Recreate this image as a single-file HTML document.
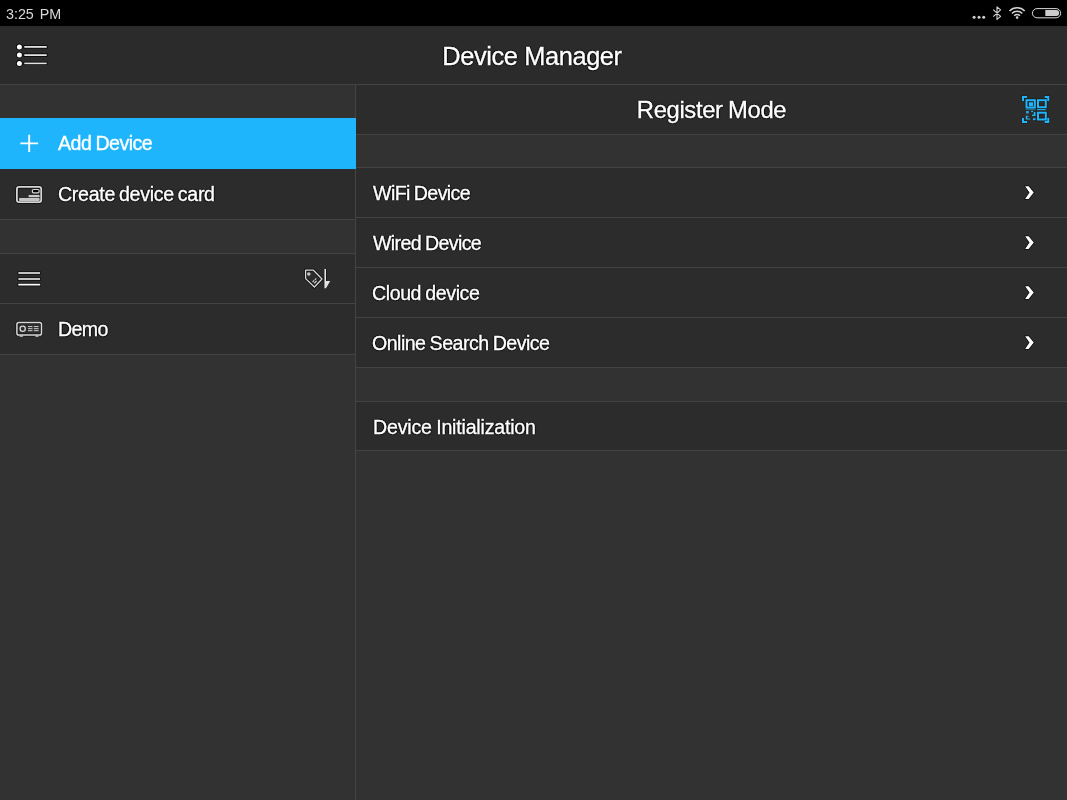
<!DOCTYPE html>
<html><head><meta charset="utf-8">
<style>
*{margin:0;padding:0;box-sizing:border-box}
html,body{width:1067px;height:800px;overflow:hidden;background:#323232;font-family:"Liberation Sans",sans-serif;color:#fff}
.abs{position:absolute}
#time,#title,.t{will-change:transform}
#status{left:0;top:0;width:1067px;height:26px;background:#000}
#time{left:5.6px;top:6px;font-size:14.3px;line-height:16px;color:#d8d8d8;word-spacing:2px;letter-spacing:0}
#header{left:0;top:26px;width:1067px;height:58px;background:#2b2b2b}
#hline{left:0;top:84px;width:1067px;height:1px;background:#434343}
#title{left:0;top:27px;width:1064px;height:58px;line-height:58px;text-align:center;font-size:25.4px;-webkit-text-stroke:0.35px #fff;text-shadow:1px 0 1px rgba(0,0,0,.75),-1px 0 1px rgba(0,0,0,.75),0 1px 1px rgba(0,0,0,.75),0 -1px 1px rgba(0,0,0,.75)}
#left{left:0;top:85px;width:355px;height:715px;background:#323232}
#vline{left:355px;top:85px;width:1px;height:715px;background:#434343}
#right{left:356px;top:85px;width:711px;height:715px;background:#323232}
.row{position:absolute;left:0;width:100%;background:#2c2c2c}
.ln{position:absolute;left:0;width:100%;height:1px;background:#434343}
.t{position:absolute;z-index:3;margin-top:0;font-size:19.6px;line-height:22px;white-space:nowrap;word-spacing:-0.8px;-webkit-text-stroke:0.35px #fff;text-shadow:1px 0 1px rgba(0,0,0,.75),-1px 0 1px rgba(0,0,0,.75),0 1px 1px rgba(0,0,0,.75),0 -1px 1px rgba(0,0,0,.75)}
svg{position:absolute;overflow:visible;z-index:4}
</style></head><body>
<div id="status" class="abs"></div>
<div id="time" class="abs">3:25 PM</div>
<div id="header" class="abs"></div>
<div id="hline" class="abs"></div>
<div id="title" class="abs" style="letter-spacing:-0.4px">Device Manager</div>

<div id="left" class="abs">
  <div class="row" style="top:33px;height:51px;width:356px;background:#1eb5fc;z-index:2"></div>
  <div class="row" style="top:84px;height:50px"></div>
  <div class="ln" style="top:134px"></div>
  <div class="ln" style="top:168px"></div>
  <div class="row" style="top:169px;height:49px"></div>
  <div class="ln" style="top:218px"></div>
  <div class="row" style="top:219px;height:50px"></div>
  <div class="ln" style="top:269px"></div>
  <div class="t" id="t-add" style="text-shadow:none;left:58.4px;top:47px;letter-spacing:-0.518px">Add Device</div>
  <div class="t" id="t-create" style="left:57.8px;top:98px;letter-spacing:-0.296px;word-spacing:-1.2px">Create device card</div>
  <div class="t" id="t-demo" style="left:57.5px;top:233px;letter-spacing:-0.65px">Demo</div>
</div>
<div id="vline" class="abs"></div>
<div id="right" class="abs">
  <div class="row" style="top:0;height:49px"></div>
  <div class="ln" style="top:49px"></div>
  <div class="ln" style="top:82px"></div>
  <div class="row" style="top:83px;height:199px"></div>
  <div class="ln" style="top:132px"></div>
  <div class="ln" style="top:182px"></div>
  <div class="ln" style="top:232px"></div>
  <div class="ln" style="top:282px"></div>
  <div class="ln" style="top:316px"></div>
  <div class="row" style="top:317px;height:48px"></div>
  <div class="ln" style="top:365px"></div>
  <div class="t" style="left:0;width:711px;text-align:center;top:12px;font-size:23.8px;line-height:26px;letter-spacing:-0.35px" id="t-reg">Register Mode</div>
  <div class="t" id="t-wifi" style="left:17px;top:97px;letter-spacing:-0.6px">WiFi Device</div>
  <div class="t" id="t-wired" style="left:17px;top:147px;letter-spacing:-0.635px">Wired Device</div>
  <div class="t" id="t-cloud" style="left:16px;top:197px;letter-spacing:-0.422px">Cloud device</div>
  <div class="t" id="t-online" style="left:16px;top:247px;letter-spacing:-0.524px">Online Search Device</div>
  <div class="t" id="t-init" style="left:16.5px;top:331px;letter-spacing:-0.2px">Device Initialization</div>
</div>

<svg id="icons" class="abs" style="left:0;top:0" width="1067" height="800" viewBox="0 0 1067 800">
<!-- status icons -->
<g id="st-dots" fill="#cfcfcf"><circle cx="974.1" cy="17.3" r="1.5"/><circle cx="979" cy="17.3" r="1.5"/><circle cx="983.7" cy="17.3" r="1.5"/></g>
<path id="st-bt" d="M993.2 9.7 L1000.6 16.4 L997 19.4 L997 6.8 L1000.6 9.9 L993.2 16.6" fill="none" stroke="#d4d4d4" stroke-width="1.1" stroke-linejoin="round"/>
<g id="st-wifi" fill="none" stroke="#d4d4d4" stroke-width="1.5">
<path d="M1009.5 11 A10.6 10.6 0 0 1 1024.7 11"/>
<path d="M1011.9 13.4 A7.2 7.2 0 0 1 1022.3 13.4"/>
<path d="M1014.2 15.7 A4 4 0 0 1 1020 15.7"/>
<circle cx="1017.1" cy="17.6" r="1.3" fill="#d4d4d4" stroke="none"/>
</g>
<rect id="st-bat" x="1032.4" y="8.6" width="28.3" height="9.2" rx="4.6" fill="none" stroke="#d8d8d8" stroke-width="1"/>
<path id="st-batfill" d="M1045.3 10.1 H1056.3 A2.9 2.9 0 0 1 1056.3 15.9 H1045.3 Z" fill="#cdcdcd"/>

<!-- header list icon -->
<g id="ic-list">
<g fill="#000" stroke="#000" stroke-width="1.6" opacity="0.85">
<circle cx="19.4" cy="46.9" r="2.5"/><circle cx="19.4" cy="55.1" r="2.5"/><circle cx="19.4" cy="63.4" r="2.5"/>
<rect x="24.3" y="46" width="22.4" height="1.8"/><rect x="24.3" y="54.2" width="22.4" height="1.8"/><rect x="24.3" y="62.6" width="22.4" height="1.6"/>
</g>
<g fill="#fff">
<circle cx="19.4" cy="46.9" r="2.5"/><circle cx="19.4" cy="55.1" r="2.5"/><circle cx="19.4" cy="63.4" r="2.5"/>
</g>
<g fill="#e2e2e2">
<rect x="24.3" y="46" width="22.4" height="1.8"/><rect x="24.3" y="54.2" width="22.4" height="1.8"/><rect x="24.3" y="62.6" width="22.4" height="1.6"/>
</g>
</g>

<!-- plus -->
<path id="ic-plus" d="M20.4 143.4 H38.1 M29.2 134.8 V152.1" stroke="#fff" stroke-width="1.9" fill="none"/>

<!-- card icon -->
<g id="ic-card">
<rect x="16.9" y="186.8" width="24.3" height="15.4" rx="2.1" fill="none" stroke="#000" stroke-width="3.2" opacity="0.7"/>
<rect x="16.9" y="186.8" width="24.3" height="15.4" rx="2.1" fill="none" stroke="#d6d6d6" stroke-width="1.8"/>
<rect x="32.4" y="189.5" width="6.7" height="3.4" rx="1.3" fill="#000" stroke="#d6d6d6" stroke-width="1.2"/>
<rect x="28.5" y="194.9" width="11.2" height="2.3" rx="0.8" fill="#c8c8c8"/>
<rect x="19" y="198" width="20.7" height="2.9" rx="0.9" fill="#c4c4c4"/>
</g>

<!-- hamburger -->
<g id="ic-ham">
<g fill="#000" stroke="#000" stroke-width="1.4" opacity="0.85">
<rect x="18.3" y="272.15" width="21.8" height="1.7"/><rect x="18.3" y="278.15" width="21.8" height="1.7"/><rect x="18.3" y="283.85" width="21.8" height="1.7"/>
</g>
<g fill="#fff">
<rect x="18.3" y="272.15" width="21.8" height="1.7" rx="0.4"/><rect x="18.3" y="278.15" width="21.8" height="1.7" rx="0.4"/><rect x="18.3" y="283.85" width="21.8" height="1.7" rx="0.4"/>
</g>
</g>

<!-- tag sort icon -->
<g id="ic-tag">
<g fill="none" stroke="#000" stroke-width="2.8" opacity="0.75">
<path d="M305.6 270.2 H313.4 L322 279 L314.4 287 L305.6 278.6 Z"/>
<path d="M325.2 269 V288"/>
</g>
<path d="M305.6 270.2 H313.4 L322 279 L314.4 287 L305.6 278.6 Z" fill="none" stroke="#dadada" stroke-width="1.3" stroke-linejoin="round"/>
<circle cx="308.8" cy="274" r="1.8" fill="#c4c4c4"/>
<path d="M312.6 282 L314.2 280.4 M314.2 283.4 L316.6 281 M314.8 279.8 L316.2 278.4" stroke="#d8d8d8" stroke-width="1.1" fill="none"/>
<path d="M324.4 269 H326 V281 H330.2 L326 288.2 H324.4 Z" fill="#e4e4e4"/>
</g>

<!-- device icon -->
<g id="ic-dev">
<rect x="16.9" y="322.4" width="24.6" height="12.6" rx="1.8" fill="none" stroke="#000" stroke-width="3" opacity="0.6"/>
<rect x="19.5" y="335.4" width="3.6" height="1.3" rx="0.6" fill="#d4d4d4"/>
<rect x="35.2" y="335.4" width="3.6" height="1.3" rx="0.6" fill="#d4d4d4"/>
<rect x="16.9" y="322.4" width="24.6" height="12.6" rx="1.8" fill="none" stroke="#d8d8d8" stroke-width="1.5"/>
<circle cx="22.7" cy="328.7" r="2.6" fill="none" stroke="#d8d8d8" stroke-width="1.3"/>
<path d="M28 326.6 H32.5 M33.8 326.6 H38.6 M28 328.7 H32.5 M33.8 328.7 H38.6 M28 330.7 H32.5 M33.8 330.7 H38.6" stroke="#d0d0d0" stroke-width="1" fill="none"/>
</g>

<!-- QR icon -->
<g id="ic-qr-shadow" fill="none" stroke="#1c1208" opacity="0.7">
<rect x="1026.5" y="100.2" width="8.3" height="7.4" stroke-width="3.4"/>
<rect x="1038" y="100.2" width="7.8" height="7" stroke-width="3.4"/>
<rect x="1038" y="112.7" width="7.8" height="6.8" stroke-width="3.4"/>
<path d="M1027 97 H1023 V101 M1044.75 97 H1048.25 V101 M1027 122 H1023 V118 M1044.75 122 H1048.25 V118" stroke-width="3.2"/>
</g>
<g id="ic-qr" fill="none" stroke="#1eb5fc">
<path d="M1027 97 H1023 V101 M1044.75 97 H1048.25 V101 M1027 122 H1023 V118 M1044.75 122 H1048.25 V118" stroke-width="2"/>
<rect x="1026.5" y="100.2" width="8.3" height="7.4" stroke-width="2"/>
<rect x="1029" y="102.3" width="4" height="4" fill="#1eb5fc" stroke="none"/>
<rect x="1038" y="100.2" width="7.8" height="7" stroke-width="2"/>
<rect x="1038" y="112.7" width="7.8" height="6.8" stroke-width="2"/>
<path d="M1037.2 109.6 H1045.8" stroke-width="1"/>
<path d="M1025.6 109.5 H1035.6" stroke-width="0.8" opacity="0.6"/>
<g fill="#1eb5fc" stroke="none">
<rect x="1026" y="111" width="2.8" height="2.5" opacity="0.85"/>
<rect x="1031.2" y="110.7" width="1.8" height="1.4"/>
<path d="M1033.8 112 H1035.5 V116 H1032 V114.8 H1033.8 Z"/>
<path d="M1025.8 115.8 H1028.5 V116.8 H1027.2 V118.5 H1030 V119.5 H1025.8 Z"/>
<rect x="1033" y="118.3" width="2.5" height="1.8"/>
</g>
</g>

<!-- chevrons -->
<g id="ic-chev">
<g fill="#000" stroke="#000" stroke-width="1.4" opacity="0.8" stroke-linejoin="round">
<path d="M1025.1 186.2 H1028.6 L1033.8 192.6 L1028.6 199 H1025.1 L1029.5 192.6 Z"/>
<path d="M1025.1 236.2 H1028.6 L1033.8 242.6 L1028.6 249 H1025.1 L1029.5 242.6 Z"/>
<path d="M1025.1 286.2 H1028.6 L1033.8 292.6 L1028.6 299 H1025.1 L1029.5 292.6 Z"/>
<path d="M1025.1 336.2 H1028.6 L1033.8 342.6 L1028.6 349 H1025.1 L1029.5 342.6 Z"/>
</g>
<g fill="#fff">
<path d="M1025.1 186.2 H1028.6 L1033.8 192.6 L1028.6 199 H1025.1 L1029.5 192.6 Z"/>
<path d="M1025.1 236.2 H1028.6 L1033.8 242.6 L1028.6 249 H1025.1 L1029.5 242.6 Z"/>
<path d="M1025.1 286.2 H1028.6 L1033.8 292.6 L1028.6 299 H1025.1 L1029.5 292.6 Z"/>
<path d="M1025.1 336.2 H1028.6 L1033.8 342.6 L1028.6 349 H1025.1 L1029.5 342.6 Z"/>
</g>
</g>
</svg>
</body></html>
